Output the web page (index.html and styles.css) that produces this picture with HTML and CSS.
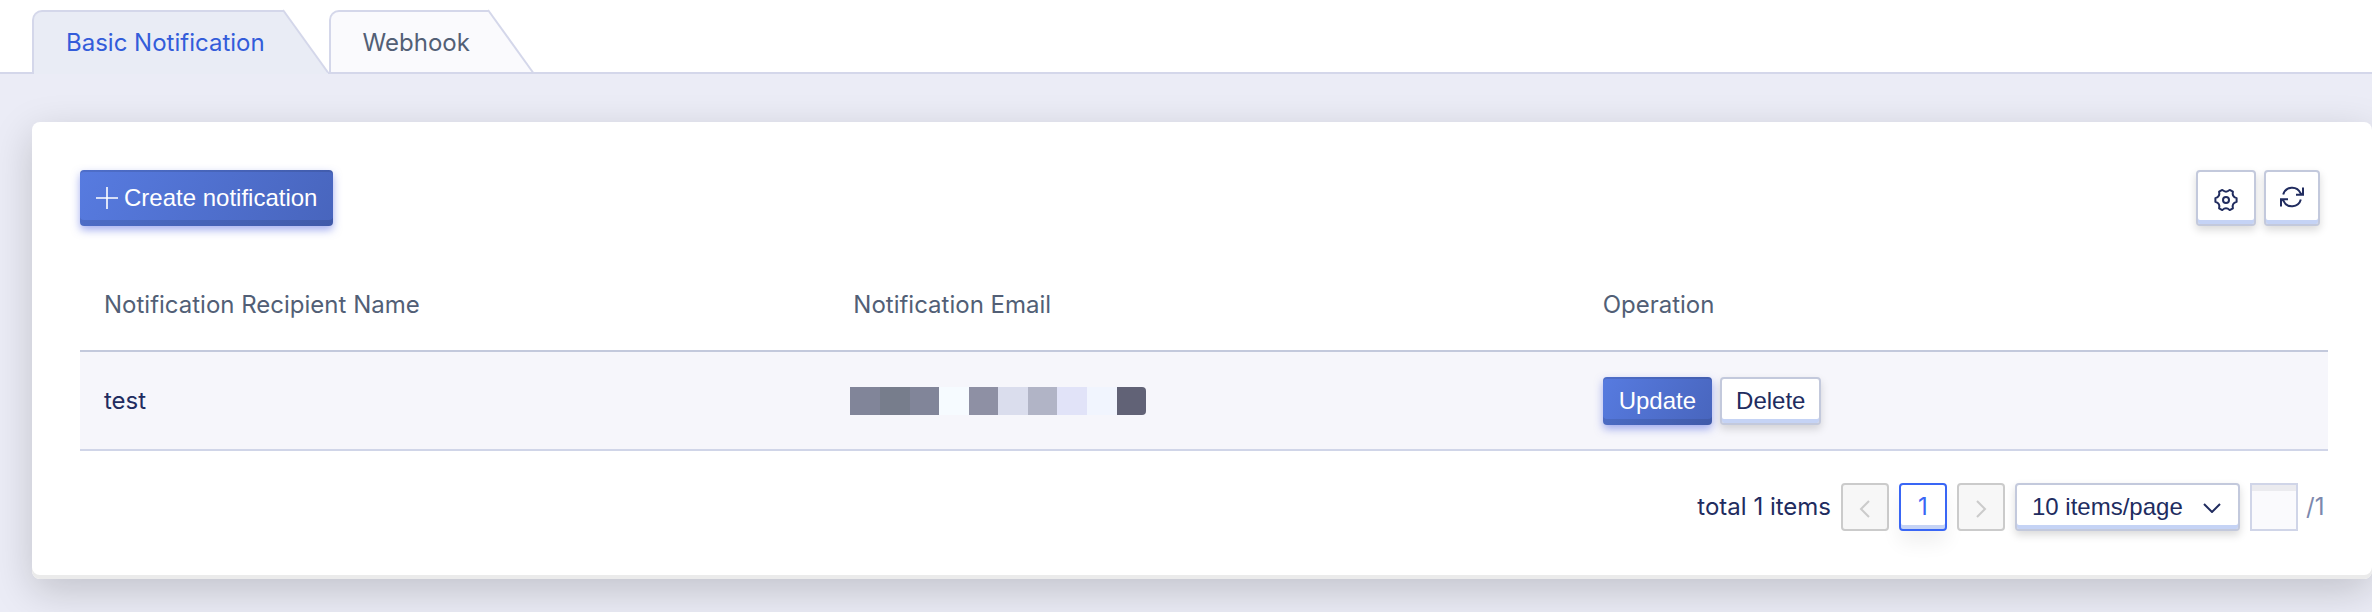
FILE: index.html
```html
<!DOCTYPE html>
<html lang="en">
<head>
<meta charset="utf-8">
<title>Notifications</title>
<link rel="stylesheet" href="styles.css">
</head>
<body>
<nav class="tabs" role="tablist" aria-label="Notification settings">
  <button class="tab tab-active" role="tab" aria-selected="true" type="button">
    <span class="tab-label">Basic Notification</span>
    <svg class="tab-edge" width="46" height="64" viewBox="0 0 46 64" aria-hidden="true"><path class="edge-fill" d="M0 0 45 62V64H0z"/><path class="edge-line" d="M0 0 45 62.500"/></svg>
  </button>
  <button class="tab" role="tab" aria-selected="false" type="button">
    <span class="tab-label">Webhook</span>
    <svg class="tab-edge" width="46" height="64" viewBox="0 0 46 64" aria-hidden="true"><path class="edge-fill" d="M0 0 45 62H0z"/><path class="edge-line" d="M0 0 45 62.500"/></svg>
  </button>
</nav>
<main class="page">
  <section class="card">
    <div class="toolbar">
      <button class="btn btn-primary btn-large" type="button">
        <svg width="22" height="22" viewBox="0 0 22 22" aria-hidden="true"><path d="M11 0V22M0 11H22" stroke="currentColor" stroke-width="1.600"/></svg>
        <span>Create notification</span>
      </button>
      <div class="toolbar-actions">
        <button class="btn btn-large btn-icon" type="button" aria-label="Settings">
          <svg width="24" height="24" viewBox="0 0 24 24" aria-hidden="true"><path d="M18.900 3.700 15.700 1.900Q12 5.500 8.300 1.900L5.100 3.700Q6.400 8.750 1.400 10.100V13.900Q6.400 15.250 5.100 20.300L8.300 22.100Q12 18.500 15.700 22.100L18.900 20.300Q17.600 15.250 22.600 13.900V10.100Q17.600 8.750 18.900 3.700z"/><circle cx="12" cy="12" r="3"/></svg>
        </button>
        <button class="btn btn-large btn-icon" type="button" aria-label="Refresh">
          <svg width="24" height="22" viewBox="0 0 24 22" aria-hidden="true"><path d="M3.200 8.500A9.200 9.200 0 0 1 20.500 7.200L22 8.800M23 1.500V8.800H16M20.800 13.500A9.200 9.200 0 0 1 3.500 14.800L2 13.200M1 20.500V13.200H8"/></svg>
        </button>
      </div>
    </div>
    <table class="list">
      <thead>
        <tr><th scope="col">Notification Recipient Name</th><th scope="col">Notification Email</th><th scope="col">Operation</th></tr>
      </thead>
      <tbody>
        <tr>
          <td>test</td>
          <td class="cell-masked">
            <div class="mask" role="img" aria-label="Hidden email address">
              <i class="m1"></i><i class="m2"></i><i class="m1"></i><i class="m3"></i><i class="m4"></i><i class="m5"></i><i class="m6"></i><i class="m7"></i><i class="m8"></i><i class="m9"></i>
            </div>
          </td>
          <td>
            <div class="row-actions">
              <button class="btn btn-primary" type="button">Update</button>
              <button class="btn" type="button">Delete</button>
            </div>
          </td>
        </tr>
      </tbody>
    </table>
    <div class="pager">
      <span class="total">total 1 items</span>
      <button class="page-btn" type="button" disabled aria-label="Previous page"><svg width="12" height="18" viewBox="0 0 12 18" aria-hidden="true"><path d="M10 1 2 9 10 17"/></svg></button>
      <button class="page-btn page-current" type="button" aria-current="page">1</button>
      <button class="page-btn" type="button" disabled aria-label="Next page"><svg width="12" height="18" viewBox="0 0 12 18" aria-hidden="true"><path d="M2 1 10 9 2 17"/></svg></button>
      <div class="select-wrap">
        <select class="page-size" aria-label="Items per page"><option>10 items/page</option><option>20 items/page</option><option>50 items/page</option></select>
        <svg class="chevron" width="18" height="10" viewBox="0 0 18 10" aria-hidden="true"><path d="M1 1 9 9 17 1"/></svg>
      </div>
      <div class="jump">
        <input class="jump-input" type="text" aria-label="Go to page">
        <span class="jump-total">/1</span>
      </div>
    </div>
  </section>
</main>
</body>
</html>
```
FILE: styles.css
```css
* { box-sizing: border-box; }
body {
  margin: 0;
  min-height: 100vh;
  display: flex;
  flex-direction: column;
  background: #ebecf6;
  color: #212c5f;
  font: 24px/32px Inter, "Liberation Sans", sans-serif;
}
button, input, select { margin: 0; font: 24px/32px "Liberation Sans", Arial, sans-serif; color: inherit; }
svg { flex: none; fill: none; stroke: currentColor; }

.tabs {
  display: flex;
  padding: 10px 0 0 32px;
  background: linear-gradient(#d4d7ea, #d4d7ea) bottom / 100% 2px no-repeat #fff;
}
.tab {
  display: flex;
  padding: 0;
  border: 0;
  background: none;
  color: #525f76;
  font-family: Inter, "Liberation Sans", sans-serif;
}
.tab-label {
  height: 64px;
  padding: 15px 18px 0 32px;
  border: solid #d4d7ea;
  border-width: 2px 0 2px 2px;
  border-radius: 10px 0 0 0;
  background: #fafafd;
}
.tab-edge { display: block; overflow: visible; }
.edge-fill { fill: #fafafd; stroke: none; }
.edge-line { stroke: #d4d7ea; stroke-width: 2; }
.tab-active { color: #335cda; }
.tab-active .tab-label { border-bottom: 0; background: #e9ecf5; }
.tab-active .edge-fill { fill: #e9ecf5; }

.page { flex: 1; padding: 48px 0 33px 32px; overflow: hidden; }
.card {
  padding: 48px 44px 48px 48px;
  border-radius: 8px;
  background: #fff;
  box-shadow: inset 0 -4px #ebebeb, 0 12px 40px rgba(0, 0, 0, .18);
}
.toolbar { display: flex; justify-content: space-between; padding-right: 8px; }
.toolbar-actions { display: flex; gap: 8px; }

.btn {
  display: flex;
  align-items: center;
  justify-content: center;
  gap: 6px;
  height: 48px;
  padding: 0 14px;
  border: 2px solid #c3c9dc;
  border-radius: 4px;
  background: #fff;
  box-shadow: inset 0 -4px #c5d3f5, 0 4px 8px rgba(0, 0, 0, .15);
}
.btn-large { height: 56px; padding-bottom: 1px; }
.btn-primary {
  padding-right: 16px;
  padding-left: 16px;
  border: 0;
  color: #fff;
  background: linear-gradient(120deg, #577be0, #4865bd);
  box-shadow: inset 0 2px rgba(0, 0, 0, .1), inset 0 -6px rgba(0, 0, 0, .1), 0 4px 8px rgba(75, 95, 225, .5);
}
.btn-icon { width: 56px; padding: 0 0 2px; color: #212c5f; stroke-width: 2; }
.btn-icon:first-child { width: 60px; padding: 4px 0 0; stroke-linejoin: round; }

.list { width: 100%; margin-top: 32px; border-collapse: separate; border-spacing: 0; table-layout: fixed; }
.list th {
  height: 94px;
  padding: 2px 24px 0;
  border-bottom: 2px solid #c3c9dc;
  color: #525f76;
  font-weight: 400;
  text-align: left;
}
.list td { height: 99px; padding: 0 24px; border-bottom: 2px solid #d0d5e8; background: #f6f6fb; }
.list .cell-masked { padding-left: 21px; }
.row-actions { display: flex; gap: 8px; }
.mask { display: flex; width: 296px; height: 28px; border-radius: 0 4px 4px 0; overflow: hidden; }
.mask i { flex: 1; }
.m1 { background: #818599; }
.m2 { background: #777d8c; }
.m3 { background: #f6fbff; }
.m4 { background: #8e90a4; }
.m5 { background: #dadded; }
.m6 { background: #b1b4c6; }
.m7 { background: #e1e3f8; }
.m8 { background: #f1f5fe; }
.m9 { background: #616276; }

.pager { display: flex; align-items: center; justify-content: flex-end; gap: 10px; margin-top: 32px; }
.page-btn {
  display: flex;
  align-items: center;
  justify-content: center;
  width: 48px;
  height: 48px;
  padding: 4px 0 0;
  border: 2px solid #cbcbcb;
  border-radius: 4px;
  background: #f7f7f7;
  color: #cbcbcb;
  stroke-width: 2;
}
.page-current {
  padding: 0;
  border-color: #3966f5;
  background: #fff;
  color: #3966f5;
  font-family: Inter, "Liberation Sans", sans-serif;
  box-shadow: inset 0 -4px #c5d3f5, 0 12px 20px rgba(0, 0, 0, .06);
}
.select-wrap { position: relative; }
.page-size {
  display: block;
  width: 225px;
  height: 48px;
  padding: 0 40px 0 15px;
  border: 2px solid #c3c9dc;
  border-radius: 4px;
  appearance: none;
  background: #fff;
  box-shadow: inset 0 -4px #c5d3f5, 0 4px 8px rgba(0, 0, 0, .15);
}
.chevron { position: absolute; top: 20px; right: 19px; stroke-width: 2; pointer-events: none; }
.jump { display: flex; align-items: center; gap: 8px; color: #7c88ad; }
.jump-total { min-width: 22px; }
.jump-input {
  width: 48px;
  height: 48px;
  padding: 0 8px;
  border: 2px solid #d0d5e8;
  border-radius: 0;
  background: #fafafd;
  box-shadow: inset 0 6px #ebebef;
}
```
